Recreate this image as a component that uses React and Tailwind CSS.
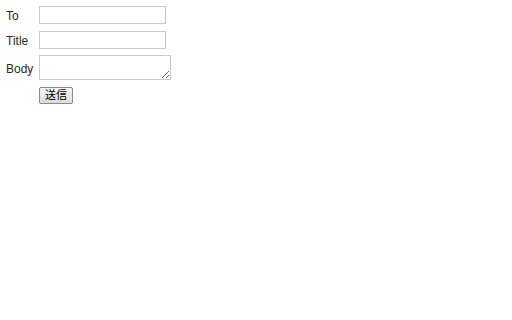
import React from 'react';

export default function App() {
  return (
    <div className="w-[512px] h-[320px] bg-white text-[12px] text-[#2a2a2a] font-['Liberation_Sans','Noto_Sans_CJK_JP',sans-serif]">
      <div className="pt-[6px] pl-[6px] grid grid-cols-[33px_auto] gap-y-[7px] items-start w-max">
        <span className="leading-[16px] pt-[2px]">To</span>
        <input type="text" className="w-[127px] h-[18px] border border-[#c8c8c8] bg-white outline-none" />
        <span className="leading-[16px] pt-[2px]">Title</span>
        <input type="text" className="w-[127px] h-[18px] border border-[#c8c8c8] bg-white outline-none" />
        <span className="leading-[18px] pt-[4px]">Body</span>
        <textarea className="w-[132px] h-[25px] -mt-[1px] border border-[#c8c8c8] bg-white outline-none resize-y block" />
        <span />
        <button className="w-[34px] h-[17px] border border-[#8a8a8a] rounded-[2px] bg-gradient-to-b from-[#f6f6f6] to-[#dcdcdc] text-[11px] leading-[15px] text-black">送信</button>
      </div>
    </div>
  );
}
